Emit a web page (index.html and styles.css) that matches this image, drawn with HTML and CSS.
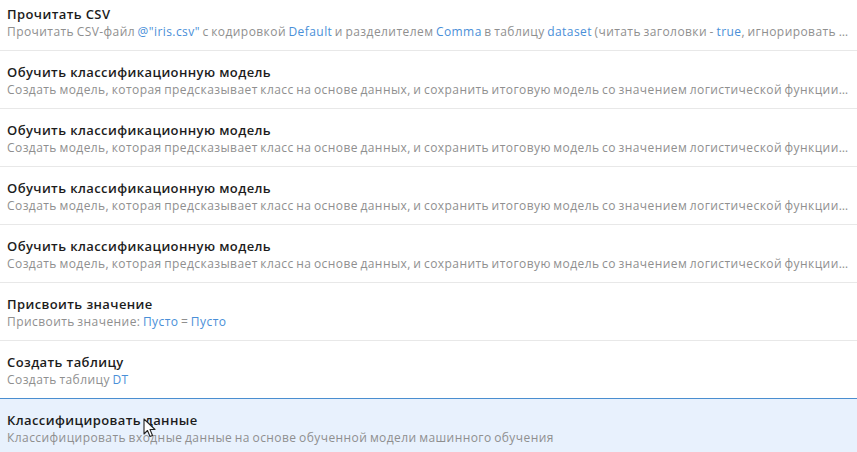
FILE: index.html
```html
<!DOCTYPE html>
<html lang="ru">
<head>
<meta charset="utf-8">
<link rel="stylesheet" href="styles.css">
</head>
<body>
<ul class="list">
  <li class="item">
    <div class="title">Прочитать CSV</div>
    <div class="desc">Прочитать CSV-файл <span class="v">@"iris.csv"</span> с кодировкой <span class="v">Default</span> и разделителем <span class="v">Comma</span> в таблицу <span class="v">dataset</span> (читать заголовки - <span class="v">true</span>, игнорировать пустые строки - <span class="v">true</span>)</div>
  </li>
  <li class="item">
    <div class="title">Обучить классификационную модель</div>
    <div class="desc">Создать модель, которая предсказывает класс на основе данных, и сохранить итоговую модель со значением логистической функции потерь</div>
  </li>
  <li class="item">
    <div class="title">Обучить классификационную модель</div>
    <div class="desc">Создать модель, которая предсказывает класс на основе данных, и сохранить итоговую модель со значением логистической функции потерь</div>
  </li>
  <li class="item">
    <div class="title">Обучить классификационную модель</div>
    <div class="desc">Создать модель, которая предсказывает класс на основе данных, и сохранить итоговую модель со значением логистической функции потерь</div>
  </li>
  <li class="item">
    <div class="title">Обучить классификационную модель</div>
    <div class="desc">Создать модель, которая предсказывает класс на основе данных, и сохранить итоговую модель со значением логистической функции потерь</div>
  </li>
  <li class="item">
    <div class="title">Присвоить значение</div>
    <div class="desc">Присвоить значение: <span class="v">Пусто</span> = <span class="v">Пусто</span></div>
  </li>
  <li class="item">
    <div class="title">Создать таблицу</div>
    <div class="desc">Создать таблицу <span class="v">DT</span></div>
  </li>
  <li class="item active">
    <div class="title">Классифицировать данные</div>
    <div class="desc">Классифицировать входные данные на основе обученной модели машинного обучения</div>
    <svg class="cursor" width="14" height="20" viewBox="0 0 14 20"><path d="M1 1 L1 16 L4.5 12.5 L7 18.5 L9.5 17.5 L7 11.5 L12 11.5 Z" fill="#fff" stroke="#222" stroke-width="1.1" stroke-linejoin="round"/></svg>
  </li>
</ul>
</body>
</html>
```
FILE: styles.css
```css
html, body {
  margin: 0;
  padding: 0;
  background: #fff;
  overflow: hidden;
}
body {
  font-family: "Open Sans", "Noto Sans", sans-serif;
}
.list {
  list-style: none;
  margin: -7px 0 0 0;
  padding: 0;
}
.item {
  position: relative;
  border-bottom: 1px solid #e8e8e8;
  padding: 12px 7px 0 7px;
  box-sizing: border-box;
  height: 58px;
}
.title {
  font-size: 13px;
  font-weight: 600;
  letter-spacing: 0.4px;
  color: #1c1c1c;
  line-height: 18px;
  white-space: nowrap;
}
.desc {
  font-size: 12px;
  letter-spacing: 0.43px;
  word-spacing: -1px;
  color: #8f8f8f;
  line-height: 18px;
  white-space: nowrap;
  overflow: hidden;
  text-overflow: ellipsis;
}
.v {
  color: #4a8fd8;
}
.item.active {
  background: #e8f1fd;
  border-top: 1px solid #4a8ed0;
  border-bottom: none;
  margin-top: -1px;
}
.cursor {
  position: absolute;
  left: 143px;
  top: 19px;
}
```
